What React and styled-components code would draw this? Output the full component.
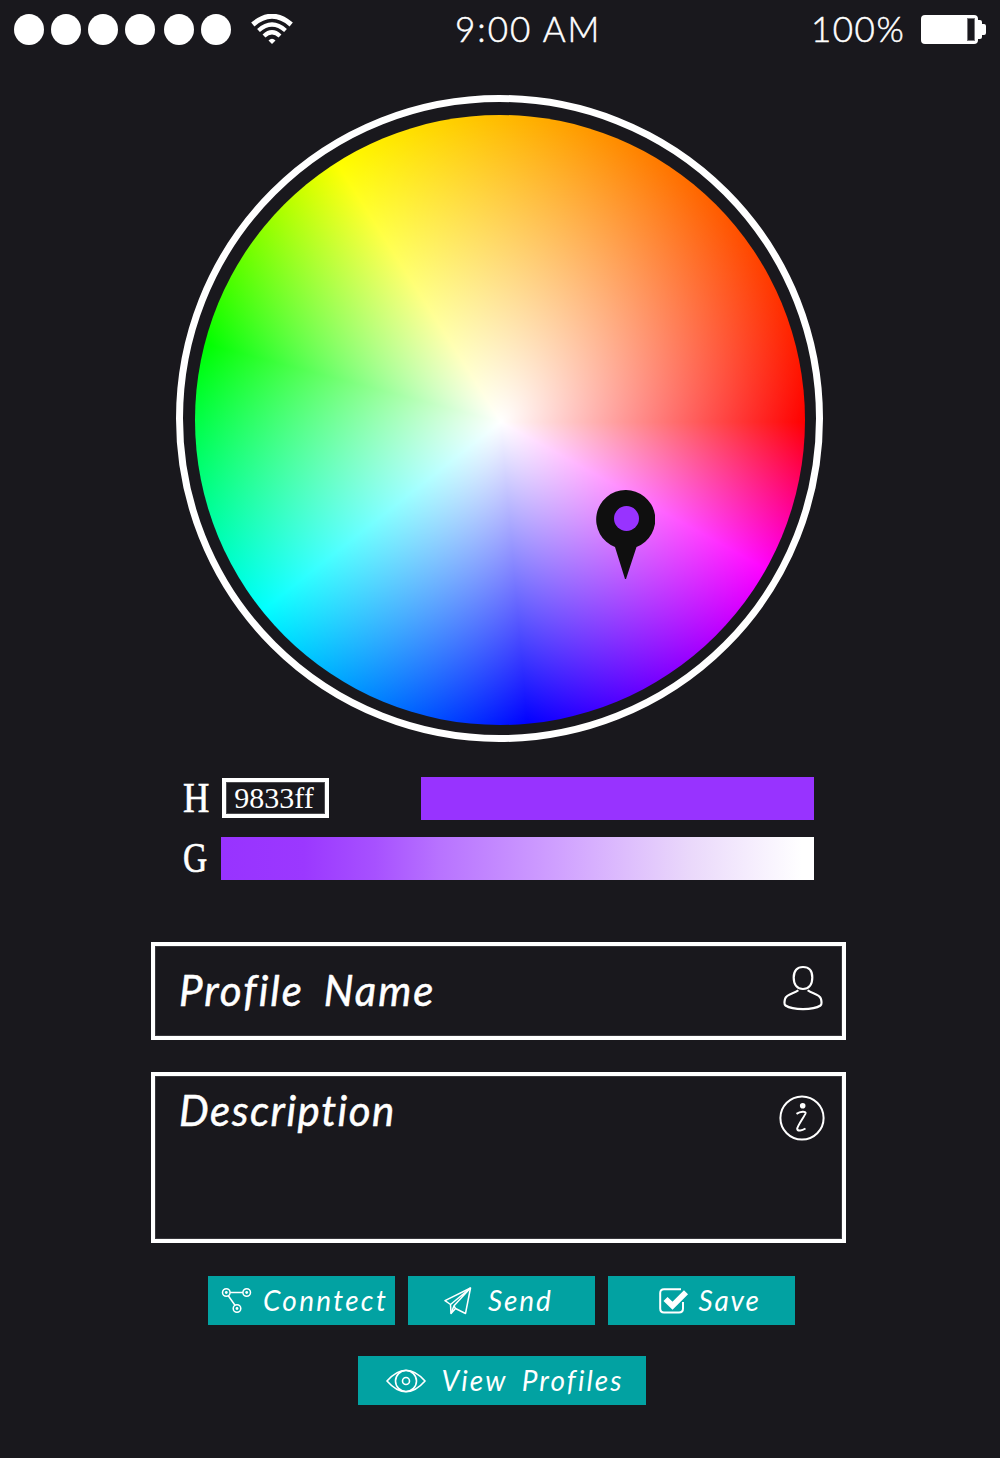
import React from 'react';
import styled, { createGlobalStyle } from 'styled-components';

const GlobalStyle = createGlobalStyle`
  * { box-sizing: border-box; }
  html, body { margin: 0; padding: 0; background: #19181d; }
`;

const Screen = styled.main`
  width: 1000px;
  height: 1458px;
  display: flex;
  flex-direction: column;
  overflow: hidden;
  background: #19181d;
  color: #fff;
  font-family: Lato, 'Open Sans', sans-serif;
`;

const StatusBar = styled.header`
  height: 58px;
  display: grid;
  grid-template-columns: 455px 356px 1fr;
  align-items: center;
`;

const Signal = styled.div`
  display: flex;
  align-items: center;
  padding-left: 14px;
`;

const Dot = styled.span`
  width: 30px;
  height: 31px;
  border-radius: 50%;
  background: #fff;
  margin-right: ${(p) => p.$gap}px;
`;

const StatusText = styled.span`
  font-size: 35px;
  font-weight: 300;
  line-height: 56px;
  padding-bottom: 2px;
  letter-spacing: ${(p) => p.$track}px;
  white-space: pre;
  -webkit-text-stroke: 0.5px #fff;
`;

const Power = styled.div`
  display: flex;
  align-items: center;
`;

const BatterySlot = styled.div`
  display: flex;
  margin-left: auto;
  padding-right: 14px;
`;

const Ring = styled.section`
  width: 647px;
  height: 647px;
  margin: 37px 0 0 176px;
  padding: 13px 0 0 12px;
  border: 7px solid #fff;
  border-radius: 50%;
`;

const Wheel = styled.div`
  position: relative;
  width: 610px;
  height: 610px;
  border-radius: 50%;
  background:
    radial-gradient(circle 304px at 306px 307px, #fff 0%, rgba(255, 255, 255, 0) 100%),
    conic-gradient(
      from 90deg at 306px 307px,
      #f00 0deg,
      #f0f 29deg,
      #00f 85deg,
      #0ff 141.7deg,
      #0f0 194.8deg,
      #ff0 237.6deg,
      #f00 360deg
    );
`;

const Marker = styled.svg`
  position: absolute;
  left: 401px;
  top: 375px;
`;

const Readouts = styled.section`
  display: flex;
  flex-direction: column;
  gap: 17px;
  margin: 35px 0 0 183px;
`;

const ReadoutRow = styled.div`
  display: flex;
  align-items: center;
  width: 631px;
  height: 43px;
`;

const Letter = styled.span`
  width: ${(p) => p.$w}px;
  font-family: 'Liberation Serif', serif;
  font-size: 42px;
  line-height: 43px;
  transform: scaleX(${(p) => p.$squeeze});
  transform-origin: left center;
  -webkit-text-stroke: 0.6px #fff;
`;

const HexBox = styled.div`
  width: 107px;
  height: 40px;
  display: flex;
  align-items: center;
  justify-content: center;
  margin-bottom: 2px;
  padding-right: 3px;
  border: 4px solid #fff;
  box-shadow: inset 0 0 0 1px #4c4b4f;
  font-family: 'Liberation Serif', serif;
  font-size: 30px;
  line-height: 32px;
`;

const Swatch = styled.div`
  width: 393px;
  height: 43px;
  margin-left: auto;
  background: #9833ff;
`;

const ShadeBar = styled.div`
  flex: 1;
  height: 43px;
  background: linear-gradient(90deg, #9833ff 0%, #9b38ff 14%, #a751ff 26%, #b873ff 37%, #d0a1ff 57%, #ead8fb 79%, #fff 98%);
`;

const Form = styled.section`
  display: flex;
  flex-direction: column;
  gap: 32px;
  margin: 62px 0 0 151px;
`;

const Field = styled.div`
  width: 695px;
  height: ${(p) => p.$h}px;
  display: flex;
  justify-content: space-between;
  padding: ${(p) => p.$top}px ${(p) => p.$right}px 0 24px;
  border: 4px solid #fff;
  box-shadow: inset 0 0 0 1px #37363b;
`;

const FieldLabel = styled.span`
  font-size: 42px;
  font-style: italic;
  line-height: 50px;
  letter-spacing: ${(p) => p.$track}px;
  word-spacing: 8px;
  white-space: nowrap;
  -webkit-text-stroke: 0.5px #fff;
`;

const IconSlot = styled.span`
  display: flex;
  margin-top: ${(p) => p.$top}px;
`;

const Actions = styled.nav`
  display: flex;
  gap: 13px;
  margin: ${(p) => p.$top}px 0 0 ${(p) => p.$left}px;
`;

const Button = styled.button`
  width: ${(p) => p.$w || 187}px;
  height: 49px;
  display: flex;
  align-items: center;
  gap: ${(p) => p.$gap}px;
  padding: 0 0 0 ${(p) => p.$left}px;
  border: 0;
  background: #02a2a2;
  color: #fff;
  font: italic 28px/48px Lato, 'Open Sans', sans-serif;
  letter-spacing: ${(p) => p.$track}px;
  word-spacing: 6px;
  white-space: nowrap;

  svg { flex: none; }
`;

const ButtonText = styled.span`
  padding-bottom: 1px;
`;

const WifiSvg = styled.svg`
  margin-left: 19.5px;
`;

const WifiIcon = () => (
  <WifiSvg width="42" height="31" viewBox="0 0 42 31" fill="none" stroke="#fff">
    <path d="M1.800 10.500 Q21 -6 40.200 10.500" strokeWidth="5" />
    <path d="M7.500 16.500 Q21 4.500 34.500 16.500" strokeWidth="4.200" />
    <path d="M13 22 Q21 14.500 29 22" strokeWidth="4.200" />
    <path d="M17.500 26.500 Q21 23 24.500 26.500 L21 30Z" fill="#fff" stroke="none" />
  </WifiSvg>
);

const BatteryIcon = () => (
  <svg width="65" height="29" viewBox="0 0 65 29">
    <rect width="57" height="29" rx="4" fill="#fff" />
    <path d="M56 5h3q2 0 2 2v2h2q2 0 2 2v7q0 2-2 2h-2v2q0 2-2 2h-3z" fill="#fff" />
    <rect x="46.5" y="3.5" width="7" height="22" fill="#19181d" stroke="#77767a" />
  </svg>
);

const PersonIcon = () => (
  <svg width="40" height="46" viewBox="0 0 40 46" fill="none" stroke="#fff" strokeWidth="2.200">
    <path d="M20 2C14 2 10.700 6 10.700 12.500C10.700 20 14.500 24 20 24C25.500 24 29.300 20 29.300 12.500C29.300 6 26 2 20 2Z" />
    <path d="M15.300 25.300C11.500 28.800 3.500 28.500 2 34C1.300 37 1 39.500 2.500 40.500C10 45.300 30 45.300 37.500 40.500C39 39.500 38.700 37 38 34C36.500 28.500 28.500 28.800 24.700 25.300" />
  </svg>
);

const InfoIcon = () => (
  <svg width="46" height="46" viewBox="0 0 46 46" fill="none" stroke="#fff">
    <circle cx="23" cy="23" r="21.600" strokeWidth="2" />
    <circle cx="23.700" cy="10.700" r="2.800" fill="#fff" stroke="none" />
    <path d="M17.500 18.800C21 16.500 27.500 15.800 26.500 18.500C25.500 21 18 31.500 18.200 33.800C18.500 36.500 23 35.500 26.500 33.500" strokeWidth="2" />
  </svg>
);

const ConnectIcon = () => (
  <svg width="31" height="27" viewBox="0 0 31 27" fill="none" stroke="#fff" strokeWidth="1.500">
    <circle cx="5.300" cy="5.500" r="3.800" />
    <circle cx="25.700" cy="5.500" r="3.800" />
    <circle cx="16" cy="21.500" r="3.800" />
    <path d="M9.200 5.500H21.900M7.300 8.800 14 18.200" />
    <g fill="#fff" stroke="none">
      <circle cx="5.300" cy="5.500" r="1.400" />
      <circle cx="25.700" cy="5.500" r="1.400" />
      <circle cx="16" cy="21.500" r="1.400" />
    </g>
  </svg>
);

const PlaneIcon = () => (
  <svg width="28" height="28" viewBox="0 0 28 28" fill="none" stroke="#fff" strokeWidth="1.500" strokeLinejoin="round">
    <path d="M26.500 1 1 13.700 6.500 17.500 7 26.500 11.500 21.500 21.500 26.500Z" />
    <path d="M26.500 1 6.500 17.500M26.500 1 10 18.800 7 26.500M10 18.800 11.500 21.500" />
  </svg>
);

const CheckIcon = () => (
  <svg width="30" height="26" viewBox="0 0 30 26" fill="none" stroke="#fff">
    <path d="M22 1.300H5Q1.200 1.300 1.200 5V20.500Q1.200 24.500 5 24.500H20Q24 24.500 24 20.500V14" strokeWidth="2" />
    <path d="M6.500 11 13.500 17.700 27 4.300" strokeWidth="5.800" />
  </svg>
);

const EyeIcon = () => (
  <svg width="40" height="24" viewBox="0 0 40 24" fill="none" stroke="#fff" strokeWidth="1.600">
    <path d="M1 12C8 4 13.500 1.200 20 1.200S32 4 39 12C32 20 26.500 22.800 20 22.800S8 20 1 12Z" />
    <circle cx="20" cy="12" r="10.500" />
    <circle cx="20" cy="12" r="3.500" />
  </svg>
);

const DOT_GAPS = [7, 7, 7, 9, 7, 0];

export default function App() {
  return (
    <>
      <GlobalStyle />
      <Screen>
        <StatusBar>
          <Signal>
            {DOT_GAPS.map((gap, i) => <Dot key={i} $gap={gap} />)}
            <WifiIcon />
          </Signal>
          <StatusText $track={2}>9:00 AM</StatusText>
          <Power>
            <StatusText $track={1.5}>100%</StatusText>
            <BatterySlot><BatteryIcon /></BatterySlot>
          </Power>
        </StatusBar>

        <Ring>
          <Wheel>
            <Marker width="59" height="90" viewBox="0 0 59 90">
              <path d="M29.500 0A29.500 29.500 0 0 1 40.500 57L30 89H29L19 57A29.500 29.500 0 0 1 29.500 0Z" fill="#0f0f0f" />
              <circle cx="30.500" cy="28.500" r="12.500" fill="#9833ff" />
            </Marker>
          </Wheel>
        </Ring>

        <Readouts>
          <ReadoutRow>
            <Letter $w={39} $squeeze={0.87}>H</Letter>
            <HexBox>9833ff</HexBox>
            <Swatch />
          </ReadoutRow>
          <ReadoutRow>
            <Letter $w={38} $squeeze={0.8}>G</Letter>
            <ShadeBar />
          </ReadoutRow>
        </Readouts>

        <Form>
          <Field $h={98} $top={19} $right={19.5}>
            <FieldLabel $track={2}>Profile Name</FieldLabel>
            <IconSlot $top={0}><PersonIcon /></IconSlot>
          </Field>
          <Field $h={171} $top={9} $right={17.5}>
            <FieldLabel $track={1.5}>Description</FieldLabel>
            <IconSlot $top={9.5}><InfoIcon /></IconSlot>
          </Field>
        </Form>

        <Actions $top={33} $left={208}>
          <Button $left={13} $gap={11} $track={2.3}><ConnectIcon /><ButtonText>Conntect</ButtonText></Button>
          <Button $left={36} $gap={16} $track={1.9}><PlaneIcon /><ButtonText>Send</ButtonText></Button>
          <Button $left={51} $gap={9.5} $track={1.8}><CheckIcon /><ButtonText>Save</ButtonText></Button>
        </Actions>
        <Actions $top={31} $left={358}>
          <Button $w={288} $left={27.5} $gap={16} $track={2.1}><EyeIcon /><ButtonText>View Profiles</ButtonText></Button>
        </Actions>
      </Screen>
    </>
  );
}
